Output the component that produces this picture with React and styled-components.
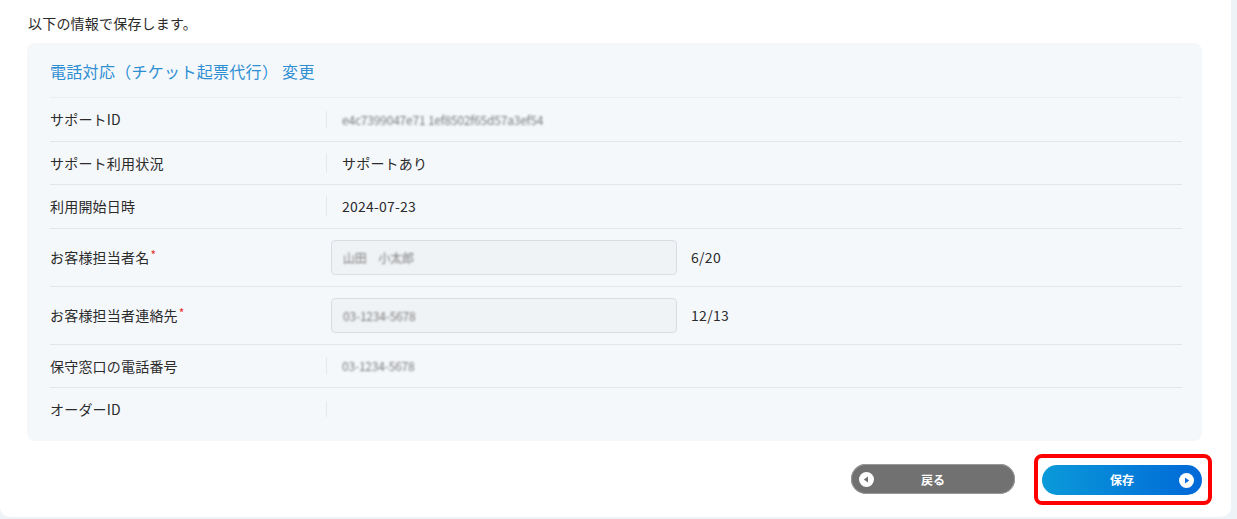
import styled, { createGlobalStyle } from "styled-components";

const GlobalStyle = createGlobalStyle`
  html, body {
    margin: 0;
    padding: 0;
    background: #eef3f8;
  }
  body {
    font-family: "Noto Sans CJK JP", "Noto Sans", sans-serif;
    color: #2b2b2b;
  }
`;

const Panel = styled.div`
  width: 1231px;
  height: 517px;
  background: #fff;
  border-radius: 0 0 10px 10px;
  box-sizing: border-box;
  padding: 13px 29px 0 27px;
`;

const Lead = styled.p`
  margin: 0 0 10px 1px;
  font-size: 14px;
  letter-spacing: 0.2px;
  line-height: 20px;
`;

const Card = styled.section`
  background: #f5f8fb;
  border-radius: 8px;
  padding: 0 20px 10px 23px;
`;

const Title = styled.h2`
  margin: 0;
  height: 53px;
  display: flex;
  align-items: center;
  font-size: 16px;
  letter-spacing: 0.3px;
  font-weight: 400;
  color: #2f8fd3;
  border-bottom: 1px solid #ebeff3;
  padding-top: 1px;
`;

const Row = styled.div`
  display: grid;
  grid-template-columns: 276px 1fr;
  align-items: center;
  height: ${(p) => (p.$tall ? 57 : 42.5)}px;
  border-bottom: ${(p) => (p.$last ? "none" : "1px solid #e3e7eb")};
  font-size: 14px;
  letter-spacing: 0.2px;
`;

const Label = styled.div`
  display: flex;
  align-items: center;
`;

const Req = styled.span`
  color: #e5322d;
  font-size: 12px;
  margin-left: 1px;
  position: relative;
  top: -3px;
`;

const Value = styled.div`
  display: flex;
  align-items: center;
  min-height: 16px;
  border-left: ${(p) => (p.$field ? "none" : "1px solid #e4e7eb")};
  padding-left: ${(p) => (p.$field ? 5 : 15)}px;
`;

const Blurred = styled.span`
  color: #7a7a7a;
  filter: blur(1px);
  font-size: 12px;
  letter-spacing: -0.2px;
`;

const Field = styled.div`
  width: 346px;
  height: 35px;
  box-sizing: border-box;
  background: #f0f3f6;
  border: 1px solid #dadee3;
  border-radius: 4px;
  display: flex;
  align-items: center;
  padding-left: 11px;
`;

const Counter = styled.span`
  margin-left: 14px;
  font-size: 14px;
  letter-spacing: 0.3px;
`;

const Actions = styled.div`
  display: flex;
  justify-content: flex-end;
  align-items: center;
  gap: 19px;
  margin-top: 13px;
  margin-right: -10px;
`;

const Highlight = styled.div`
  border: 4px solid #ff0000;
  border-radius: 8px;
  padding: 7px 6px 6px 4px;
`;

const Button = styled.button`
  position: relative;
  width: ${(p) => (p.$primary ? 160 : 164)}px;
  height: 30px;
  border: none;
  border-radius: 15px;
  background: ${(p) =>
    p.$primary ? "linear-gradient(90deg, #0a9ad9 0%, #0068d8 100%)" : "#717171"};
  color: #fff;
  font-family: inherit;
  font-size: 12px;
  font-weight: 700;
  display: flex;
  align-items: center;
  justify-content: center;
  padding: 0;
  box-shadow: ${(p) => (p.$primary ? "none" : "0 0 0 1px #9a9a9a inset")};
`;

const Icon = styled.svg`
  position: absolute;
  top: 8px;
  ${(p) => (p.$right ? "right: 8px;" : "left: 8px;")}
`;

const Arrow = ({ right, color }) => (
  <Icon $right={right} width="15" height="15" viewBox="0 0 15 15">
    <circle cx="7.5" cy="7.5" r="7.5" fill="#fff" />
    {right ? (
      <path d="M6 4.6 L10.2 7.5 L6 10.4 Z" fill={color} />
    ) : (
      <path d="M9 4.6 L4.8 7.5 L9 10.4 Z" fill={color} />
    )}
  </Icon>
);

const rows = [
  { label: "サポートID", value: "e4c7399047e71 1ef8502f65d57a3ef54", blur: true },
  { label: "サポート利用状況", value: "サポートあり" },
  { label: "利用開始日時", value: "2024-07-23" },
  { label: "お客様担当者名", field: "山田　小太郎", count: "6/20", req: true },
  { label: "お客様担当者連絡先", field: "03-1234-5678", count: "12/13", req: true },
  { label: "保守窓口の電話番号", value: "03-1234-5678", blur: true },
  { label: "オーダーID", value: "" },
];

export default function App() {
  return (
    <>
      <GlobalStyle />
      <Panel>
        <Lead>以下の情報で保存します。</Lead>
        <Card>
          <Title>電話対応（チケット起票代行） 変更</Title>
          {rows.map((r, i) => (
            <Row key={r.label} $tall={!!r.field} $last={i === rows.length - 1}>
              <Label>
                {r.label}
                {r.req && <Req>*</Req>}
              </Label>
              {r.field ? (
                <Value $field>
                  <Field>
                    <Blurred>{r.field}</Blurred>
                  </Field>
                  <Counter>{r.count}</Counter>
                </Value>
              ) : (
                <Value>{r.blur ? <Blurred>{r.value}</Blurred> : r.value}</Value>
              )}
            </Row>
          ))}
        </Card>
        <Actions>
          <Button type="button">
            <Arrow color="#717171" />
            戻る
          </Button>
          <Highlight>
            <Button type="button" $primary>
              保存
              <Arrow right color="#0a6fd8" />
            </Button>
          </Highlight>
        </Actions>
      </Panel>
    </>
  );
}
